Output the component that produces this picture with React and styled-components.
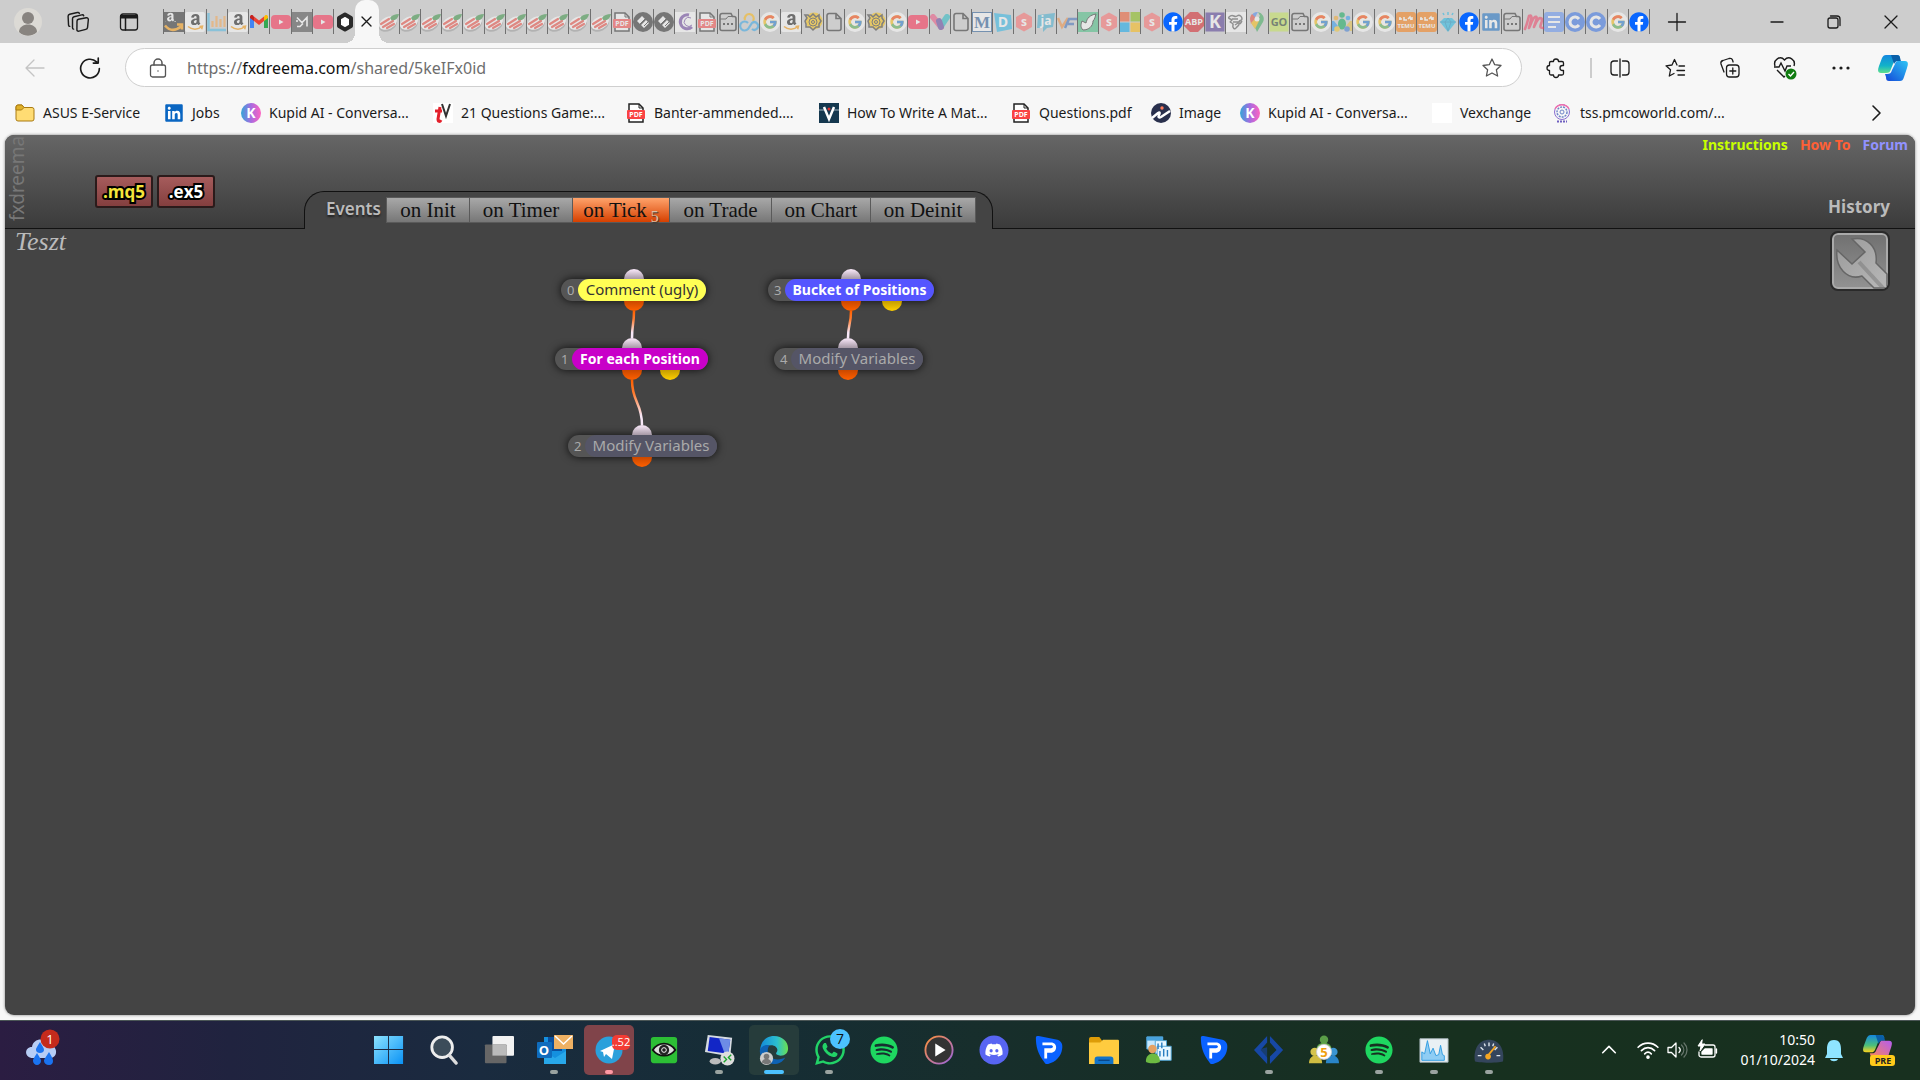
import React from "react";
import styled, { createGlobalStyle } from "styled-components";
import {
  FaAmazon,
  FaDiscord,
  FaFacebook,
  FaLinkedin,
  FaSpotify,
  FaWhatsapp,
} from "react-icons/fa";
import { FcGoogle } from "react-icons/fc";

const uiFont = `"Noto Sans", "Open Sans", sans-serif`;

const GlobalStyle = createGlobalStyle`
  * {
    box-sizing: border-box;
  }

  body {
    margin: 0;
    background: #f7f7f7;
    font-family: ${uiFont};
  }

  button {
    margin: 0;
    padding: 0;
    border: 0;
    background: none;
    color: inherit;
    font: inherit;
  }

  a {
    color: inherit;
    text-decoration: none;
  }

  svg {
    display: block;
    flex-shrink: 0;
    overflow: visible;
  }
`;

// Icons
const Svg = ({ size = 20, box = 20, children, ...rest }) => (
  <svg width={size} height={size} viewBox={`0 0 ${box} ${box}`} fill="none" {...rest}>
    {children}
  </svg>
);

const Line = ({ size = 20, color = "#1b1b1b", children }) => (
  <Svg size={size} stroke={color} strokeWidth="1.3" strokeLinecap="round" strokeLinejoin="round">
    {children}
  </Svg>
);

const Letter = ({ children, x = 10, y = 15, size = 14, fill = "#fff", ...rest }) => (
  <text
    x={x}
    y={y}
    fontSize={size}
    fill={fill}
    textAnchor="middle"
    fontWeight="700"
    fontFamily="Open Sans, sans-serif"
    {...rest}
  >
    {children}
  </text>
);

const IconAmazon = () => (
  <Svg>
    <rect width="20" height="20" rx="2" fill="#fff" />
    <FaAmazon x="2" y="1" size={17} color="#111" />
    <path d="M0 13h20v5H0z" fill="#fff" />
    <path d="M3 14.500c4 3.500 10 3.500 14 0M14.500 14.500l3-.3-.8 3" stroke="#f90" strokeWidth="1.500" />
  </Svg>
);

const IconAmazonDark = () => (
  <Svg>
    <rect width="20" height="20" fill="#222" />
    <FaAmazon x="0" y="0" size={13} color="#fff" />
    <path d="M0 10h12v4H0z" fill="#222" />
    <path d="M1 13.500c5 6 11 5 16 1M13 12.500h5v5" stroke="#f90" strokeWidth="2.500" />
  </Svg>
);

const IconBars = () => (
  <Svg>
    <path d="M1.500 1v17H19" stroke="#48b9e6" strokeWidth="2.500" />
    <path d="M5.500 15V9M9.500 15V4M13.500 15V7M17.500 15V4" stroke="#f9a54a" strokeWidth="2.200" />
  </Svg>
);

const IconGmail = () => (
  <Svg>
    <path d="M1 5v11h4V8z" fill="#4285f4" />
    <path d="M19 5v11h-4V8z" fill="#34a853" />
    <path d="M1 5c0-2 2-2.500 3-1.500l1 1V9L1 6z" fill="#c5221f" />
    <path d="M5 4.500l5 4 5-4V9l-5 4-5-4z" fill="#ea4335" />
    <path d="M19 5c0-2-2-2.500-3-1.500l-1 1V9l4-3z" fill="#fbbc04" />
  </Svg>
);

const IconYoutube = () => (
  <Svg>
    <rect y="3" width="20" height="14" rx="4" fill="#ff2048" />
    <path d="M8 7.500l4.500 2.500L8 12.500z" fill="#fff" />
  </Svg>
);

const IconMail = () => (
  <Svg>
    <rect width="20" height="20" fill="#444" />
    <path d="M5 5.500l5 5 5-5v9M5 8v2M5 14.500h3l3-3" stroke="#fff" strokeWidth="1.600" />
  </Svg>
);

const IconHex = () => (
  <Svg>
    <path d="M10 2.500l6 3.500v8l-6 3.500L4 14V6z" fill="#fff" stroke="#2a2a2a" strokeWidth="4" strokeLinejoin="round" />
  </Svg>
);

const IconLeaf = () => (
  <Svg>
    <ellipse cx="9" cy="13" rx="9.500" ry="6" transform="rotate(-25 9 13)" fill="#999" />
    <ellipse cx="9" cy="11" rx="9.500" ry="6" transform="rotate(-25 9 11)" fill="#fff" />
    <path d="M11 6c2-3 5-4 9-4-1 4-3 6-7 7z" fill="#2f8f3c" />
    <path d="M2 12l8-5M4 15l10-6M8 16l7-4" stroke="#f0453a" strokeWidth="2.200" strokeLinecap="round" />
  </Svg>
);

const IconPdf = () => (
  <Svg>
    <path d="M3 1h10l4 4v14H3z" fill="#fff" stroke="#222" strokeWidth="1.500" />
    <path d="M13 1v4h4" stroke="#222" />
    <rect x="1" y="7" width="18" height="9" rx="1" fill="#fa4343" />
    <Letter y={14} size={7}>PDF</Letter>
  </Svg>
);

const IconCompass = () => (
  <Svg>
    <circle cx="10" cy="10" r="10" fill="#222" />
    <path d="M4 9l5-5 3 3-5 5zM8 13l5-5 3 3-5 5z" fill="#fff" />
    <path d="M7 12l5-5M11 14l4-4" stroke="#222" />
  </Svg>
);

const IconMoon = () => (
  <Svg>
    <rect width="20" height="20" fill="#fff" />
    <path d="M14 3a7 7 0 1 0 3 12" stroke="#6b3fa0" strokeWidth="3" />
    <path d="M16 6a4.500 4.500 0 1 0 1 7" stroke="#6b3fa0" />
  </Svg>
);

const IconTabBox = () => (
  <Svg>
    <path d="M4 1.500h9l1.500 3H16a2 2 0 0 1 2 2v10a2 2 0 0 1-2 2H4a2 2 0 0 1-2-2v-13a2 2 0 0 1 2-2z" stroke="#222" strokeWidth="1.600" />
    <path d="M2 7h6l2-2.500h5" stroke="#222" />
    <path d="M5 12h2M9 12h2M13 12h2" stroke="#222" strokeWidth="2" />
  </Svg>
);

const IconCloud = () => (
  <Svg strokeWidth="2.200">
    <path d="M6 8a4.500 4.500 0 1 1 8 1" stroke="#ffb400" />
    <path d="M9 11a4.500 4.500 0 1 0 0 6l4-6a3.800 3.800 0 1 1 0 6" stroke="#2aa3e8" />
  </Svg>
);

const IconGoogle = () => (
  <Svg>
    <circle cx="10" cy="10" r="10" fill="#fff" />
    <FcGoogle x="2" y="2" size={16} />
  </Svg>
);

const IconSun = () => (
  <Svg>
    <circle cx="11" cy="9" r="8.500" fill="#ffc400" />
    <path d="M2 3h3l2 2 3-3 3 3 3-2v3l2 3-2 3v3h-3l-3 3-3-3H3v-3l-1-3 2-3z" stroke="#333" strokeWidth="1.500" />
    <circle cx="10" cy="10" r="4" stroke="#333" />
    <circle cx="10" cy="10" r="1.500" stroke="#333" />
  </Svg>
);

const IconPage = () => (
  <Svg>
    <path d="M5 1.500h7l5 5v10a2 2 0 0 1-2 2H5a2 2 0 0 1-2-2v-13a2 2 0 0 1 2-2zM12 1.500v5h5" stroke="#222" strokeWidth="1.600" />
  </Svg>
);

const IconHeart = () => (
  <Svg>
    <path d="M3 5l8 10" stroke="#f04a7a" strokeWidth="6" strokeLinecap="round" />
    <path d="M17 5l-6 9" stroke="#19b9c3" strokeWidth="6" strokeLinecap="round" />
    <path d="M9 9l2 6" stroke="#583a9b" strokeWidth="6" strokeLinecap="round" />
  </Svg>
);

const Lettered = ({ bg, fg = "#fff", text, size = 14, radius = 0, outline, serif }) => (
  <Svg>
    <rect x="0.500" y="0.500" width="19" height="19" rx={radius} fill={bg} stroke={outline} />
    <Letter y={10 + size * 0.36} size={size} fill={fg} fontFamily={serif ? "Liberation Serif, serif" : "Open Sans, sans-serif"}>
      {text}
    </Letter>
  </Svg>
);

const IconBadge = ({ color = "#ff6666", text = "s" }) => (
  <Svg>
    <path d="M10 0.500l8 4.500v10l-8 4.500L2 15V5z" fill={color} />
    <Letter y={14} size={12}>{text}</Letter>
  </Svg>
);

const IconMicrosoft = () => (
  <Svg>
    <path d="M0 0h9.500v9.500H0z" fill="#f25022" />
    <path d="M10.500 0H20v9.500h-9.500z" fill="#7fba00" />
    <path d="M0 10.500h9.500V20H0z" fill="#00a4ef" />
    <path d="M10.500 10.500H20V20h-9.500z" fill="#ffb900" />
  </Svg>
);

const IconHand = () => (
  <Svg>
    <rect width="20" height="20" fill="#3fbf7f" />
    <path d="M5 18c-3-3-2-6-1-9l4 2c1-5 4-8 10-9-1 3-1 5-3 7 0 5-4 9-10 9z" fill="#fff" stroke="#222" />
  </Svg>
);

const IconSketch = () => (
  <Svg>
    <rect width="20" height="20" fill="#fff" />
    <path d="M3 5c4-4 5 1 8-1s5 1 5 3-4 1-3 4-2 3-3 5-4 0-3-3-5-2-2-4-4-2-2-4M6 7h6M7 10h6M9 13l3-2M14 12l2-3" stroke="#555" strokeWidth="1.500" />
  </Svg>
);

const IconMaps = () => (
  <Svg>
    <path d="M4 5a7 7 0 0 1 7-5l-5 9z" fill="#4285f4" />
    <path d="M3 7c0-2 1-4 2-5l4 4-5 6z" fill="#ea4335" />
    <path d="M11 0a7 7 0 0 1 5 10l-6 10c-1-3-3-6-5-8l8-8z" fill="#34a853" />
    <path d="M4 11l5-5 3 3-4 8z" fill="#fbbc04" />
    <circle cx="10" cy="7" r="2.500" fill="#fff" />
  </Svg>
);

const IconPeople = () => (
  <Svg>
    <circle cx="10" cy="3" r="2.800" fill="#00a651" />
    <ellipse cx="10" cy="12" rx="4" ry="5.500" fill="#00a651" />
    <circle cx="4" cy="6" r="2.300" fill="#f5a623" />
    <circle cx="16" cy="6" r="2.300" fill="#2196f3" />
    <path d="M2 9l4 5-4 5H0V9z" fill="#2196f3" />
    <path d="M18 9l-4 5 4 5h2V9z" fill="#e8c13c" />
    <circle cx="5" cy="17" r="2.800" fill="#f5c623" />
    <circle cx="15" cy="17" r="2.800" fill="#3578d6" />
  </Svg>
);

const IconTemu = () => (
  <Svg>
    <rect width="20" height="20" rx="3" fill="#fb7701" />
    <path d="M3 7h3M4 5v3M8 5v3h3M12 7l2-2 1 3M16 5v3" stroke="#fff" strokeWidth="1.500" />
    <Letter y={16} size={6}>TEMU</Letter>
  </Svg>
);

const IconDiamond = () => (
  <Svg>
    <path d="M6 6h8l4 4-8 10L2 10z" fill="#13b8e8" />
    <path d="M2 10h16M7 10l3 9 3-9-3-4z" stroke="#0a86b8" strokeWidth="0.800" />
    <path d="M10 0v3M5 1l1 2M15 1l-1 2" stroke="#13b8e8" strokeWidth="1.500" />
  </Svg>
);

const IconFacebook = () => (
  <Svg>
    <circle cx="10" cy="10" r="9" fill="#fff" />
    <FaFacebook size={20} color="#0866ff" />
  </Svg>
);

const IconLinkedin = () => (
  <Svg>
    <rect x="2" y="2" width="16" height="16" fill="#fff" />
    <FaLinkedin size={20} color="#0a66c2" />
  </Svg>
);

const IconMeetup = () => (
  <Svg>
    <path d="M2 17C4 12 5 8 6 4c2-1 3 0 2 4l-2 8c2-4 3-9 6-11 2-1 2 1 1 4l-2 6c2-4 3-8 6-9 3 0 2 3 1 6s-1 4 2 4" stroke="#f0365b" strokeWidth="2.600" strokeLinecap="round" strokeLinejoin="round" />
  </Svg>
);

const IconDocs = () => (
  <Svg>
    <rect width="20" height="20" rx="3" fill="#5b8ff5" />
    <path d="M4 5h12M4 10h12M4 15h8" stroke="#fff" strokeWidth="2.200" />
  </Svg>
);

const IconRoundC = () => (
  <Svg>
    <circle cx="10" cy="10" r="10" fill="#2a6ae9" />
    <path d="M14 7a5 5 0 1 0 0 6" stroke="#fff" strokeWidth="3" />
  </Svg>
);

const IconKupid = () => (
  <Svg>
    <defs>
      <linearGradient id="kupid" x1="0" x2="1">
        <stop stopColor="#34a5d8" />
        <stop offset="0.500" stopColor="#a76be0" />
        <stop offset="1" stopColor="#ff62c0" />
      </linearGradient>
    </defs>
    <circle cx="10" cy="10" r="10" fill="url(#kupid)" />
    <Letter y={15}>K</Letter>
  </Svg>
);

const IconFolder = () => (
  <Svg>
    <path d="M1 4a2 2 0 0 1 2-2h4l2 2.500h8a2 2 0 0 1 2 2V16a2 2 0 0 1-2 2H3a2 2 0 0 1-2-2z" fill="#ffdc73" stroke="#a97b12" />
    <path d="M1 4a2 2 0 0 1 2-2h4l2 2.500L6.500 7H1z" fill="#e0b128" stroke="#a97b12" />
  </Svg>
);

const IconTv = () => (
  <Svg>
    <rect width="20" height="20" fill="#fff" />
    <path d="M9 1l4 12 4-12" stroke="#333" strokeWidth="2" />
    <path d="M2 8h7M7 4L5 16c0 3 2 3 3 1" stroke="#e3202b" strokeWidth="3" />
  </Svg>
);

const IconWriter = () => (
  <Svg>
    <rect width="20" height="20" fill="#15384f" />
    <path d="M5 4l5 12 5-12" stroke="#fff" strokeWidth="2.500" />
    <path d="M0 7h5M15 7h5" stroke="#9fb3c0" />
    <circle cx="10" cy="6" r="1.500" fill="#e03030" />
  </Svg>
);

const IconImage = () => (
  <Svg>
    <circle cx="10" cy="10" r="10" fill="#29304d" />
    <path d="M1 15l6-5c2-1 2 0 1 2s0 3 2 2l9-6" stroke="#fff" strokeWidth="2.500" />
    <circle cx="11" cy="5" r="1.700" fill="#ff7a59" />
  </Svg>
);

const IconEmblem = () => (
  <Svg>
    <circle cx="10" cy="9" r="7.500" stroke="#8a6fd0" />
    <path d="M3 6a8 8 0 0 1 14 0" stroke="#f06fae" strokeWidth="1.500" />
    <circle cx="10" cy="9" r="5" stroke="#6f86c8" strokeDasharray="2 1" strokeWidth="1.500" />
    <circle cx="10" cy="9" r="2" stroke="#6f86c8" />
    <path d="M5 18.500h10" stroke="#6f5fc0" strokeWidth="2" strokeDasharray="2 1" />
  </Svg>
);

const IconCopilot = ({ size = 32, warm }) => (
  <Svg size={size} box={32}>
    <defs>
      <linearGradient id={`cpa${size}`} x1="0" y1="0" x2="0" y2="1">
        <stop stopColor="#1487e0" />
        <stop offset="0.600" stopColor={warm ? "#4bbf7a" : "#12b3c8"} />
        <stop offset="1" stopColor={warm ? "#ffd21c" : "#5fe08c"} />
      </linearGradient>
      <linearGradient id={`cpb${size}`} x1="0" y1="1" x2="1" y2="0">
        <stop stopColor={warm ? "#ff8a4a" : "#1447d8"} />
        <stop offset="1" stopColor={warm ? "#b45cf0" : "#2cc5f5"} />
      </linearGradient>
    </defs>
    <path d="M9 3h11c2 0 3 1 3 3l-2 1c-3 0-4 2-5 5l-2 5c-1 3-2 4-5 4H4c-4 0-3-4-2-7l3-8c1-2 2-3 4-3z" fill={`url(#cpa${size})`} />
    <path d="M14 3h6c3 0 3 3 4 6h-3c-2 0-3 1-4 3z" fill="#0a5fa8" />
    <path d="M23 29H12c-2 0-3-1-3-4l-1-3h2c3 0 4-1 5-4l3-6c1-3 2-3 4-3h6c4 0 3 4 2 7l-3 9c-1 3-2 4-4 4z" fill={`url(#cpb${size})`} />
  </Svg>
);

// Browser tabs
const Strip = styled.nav`
  display: flex;
  align-items: center;
  height: 43px;
  background: #cdcdcd;
`;

const StripActions = styled.div`
  display: flex;
  align-items: center;
  gap: 25px;
  width: 163px;
  padding-left: 14px;
`;

const Avatar = styled.div`
  width: 28px;
  height: 28px;
  border-radius: 50%;
  background: #dcdad5;
  overflow: hidden;
`;

const StripButton = styled.button`
  padding: 0 ${({ $pad }) => $pad || 0}px;
`;

const TabGroup = styled.div`
  display: flex;
  flex: ${({ $grow }) => $grow} 1 0;
  height: 25px;
  border-left: ${({ $line }) => ($line ? "1px solid #707070" : "0")};
`;

const Tab = styled.button`
  display: flex;
  flex: 1;
  align-items: center;
  justify-content: center;
  min-width: 0;
  border-right: ${({ $last }) => ($last ? "0" : "1px solid #707070")};

  svg {
    opacity: ${({ $awake }) => ($awake ? 1 : 0.5)};
  }

  svg svg {
    opacity: 1;
  }
`;

const ActiveTab = styled.button`
  display: flex;
  align-items: center;
  justify-content: center;
  align-self: stretch;
  position: relative;
  width: 24px;
  border-radius: 10px 10px 0 0;
  background: #f7f7f7;

  &::before,
  &::after {
    content: "";
    position: absolute;
    bottom: 0;
    width: 10px;
    height: 10px;
  }

  &::before {
    right: 24px;
    background: radial-gradient(circle at 0 0, transparent 10px, #f7f7f7 10px);
  }

  &::after {
    left: 24px;
    background: radial-gradient(circle at 100% 0, #cdcdcd 10px, #f7f7f7 10px);
  }
`;

const WindowButtons = styled.div`
  display: flex;
  justify-content: space-between;
  width: 270px;
  padding: 0 19px 0 17px;
`;

const WindowGroup = styled.div`
  display: flex;
  gap: 37px;
`;

// Toolbar
const Toolbar = styled.div`
  display: flex;
  align-items: center;
  height: 49px;
  padding: 0 2px 0 25px;
  background: #f7f7f7;
`;

const ToolButton = styled.button`
  display: flex;
  align-items: center;
  justify-content: center;
  width: ${({ $w }) => $w || 55}px;
  height: 32px;
`;

const NavButtons = styled.div`
  display: flex;
  gap: 34px;
  width: 100px;
`;

const Address = styled.div`
  display: flex;
  flex: 1;
  align-items: center;
  gap: 19px;
  height: 39px;
  padding: 0 19px 0 22px;
  border: 1px solid #cfcfcf;
  border-radius: 20px;
  background: #fff;
`;

const Url = styled.a`
  flex: 1;
  color: #6e6e6e;
  font-size: 16px;
  line-height: 24px;

  b {
    color: #111;
    font-weight: 400;
  }
`;

const Divider = styled.div`
  width: 2px;
  height: 20px;
  background: #ccc;
`;

const Bookmarks = styled.div`
  display: flex;
  align-items: center;
  height: 43px;
  padding: 0 0 2px 15px;
  background: #f7f7f7;
`;

const Bookmark = styled.a`
  display: flex;
  align-items: center;
  gap: 8px;
  width: ${({ $w }) => $w}px;
  color: #1b1b1b;
  font-size: 14px;
  white-space: nowrap;
`;

const More = styled.button`
  margin-left: auto;
  padding-right: 34px;
`;

// Page
const Screen = styled.div`
  display: flex;
  flex-direction: column;
  min-height: 100vh;
`;

const Page = styled.main`
  display: flex;
  flex: 1;
  flex-direction: column;
  margin: 0 5px 5px;
  border-radius: 9px;
  background: #444;
  box-shadow: 0 0 3px rgba(0, 0, 0, 0.5);
  overflow: hidden;
`;

const Header = styled.header`
  display: flex;
  height: 94px;
  border-bottom: 1px solid #111;
  background: linear-gradient(#666, #3b3b3b);
`;

const Brand = styled.div`
  width: 90px;
  color: #777;
  font-size: 19px;
  line-height: 24px;

  span {
    display: block;
    writing-mode: vertical-rl;
    transform: rotate(180deg);
    width: 24px;
    height: 86px;
  }
`;

const Downloads = styled.div`
  display: flex;
  gap: 4px;
  width: 209px;
  padding-top: 40px;
`;

const Download = styled.button`
  width: 58px;
  height: 33px;
  border: 2px solid #2b1b1b;
  border-radius: 3px;
  background: linear-gradient(#a65c5c, #843f3f);
  color: ${({ $color }) => $color};
  font-family: "Open Sans", sans-serif;
  font-size: 17px;
  font-weight: 700;
  line-height: 26px;
  -webkit-text-stroke: 4px #000;
  paint-order: stroke fill;
`;

const Events = styled.nav`
  display: flex;
  align-self: flex-end;
  height: 38px;
  margin-bottom: -1px;
  padding: 5px 16px 0 21px;
  border: 1px solid #111;
  border-bottom: 0;
  border-radius: 20px 20px 0 0;
  background: #444;
`;

const EventsTitle = styled.h2`
  width: 60px;
  margin: 0;
  color: #bbb;
  font-size: 17px;
  font-weight: 600;
  line-height: 24px;
  text-shadow: 0 2px 2px #222;
`;

const EventTab = styled.button`
  width: ${({ $w }) => $w}px;
  height: 26px;
  border: 1px solid #5a5a5a;
  border-left-width: ${({ $first }) => ($first ? 1 : 0)}px;
  background: ${({ $active }) =>
    $active ? "linear-gradient(#ffa36b, #d64000)" : "linear-gradient(#a8a8a8, #777)"};
  color: #111;
  font-family: Georgia, "Liberation Serif", serif;
  font-size: 21px;
  line-height: 22px;
  white-space: nowrap;

  sub {
    color: #d8c0a8;
    font-size: 16px;
    line-height: 0;
    text-shadow: 1px 1px 1px #333;
  }
`;

const HeaderSide = styled.div`
  display: flex;
  flex-direction: column;
  justify-content: space-between;
  align-items: flex-end;
  margin-left: auto;
  padding: 0 7px 9px 0;
`;

const Links = styled.nav`
  display: flex;
  gap: 12px;
  font-size: 14px;
  font-weight: 700;
  line-height: 20px;
`;

const HeaderLink = styled.a`
  color: ${({ $color }) => $color};
`;

const History = styled.a`
  margin-right: 18px;
  color: #bbb;
  font-size: 17px;
  font-weight: 700;
  line-height: 24px;
`;

const Canvas = styled.section`
  position: relative;
  flex: 1;
`;

const CanvasTop = styled.div`
  display: flex;
  justify-content: space-between;
  align-items: flex-start;
  padding: 1px 25px 0 10px;
`;

const Title = styled.h1`
  margin: 0;
  color: #bbb;
  font-family: "Monotype Corsiva", "Liberation Serif", serif;
  font-size: 26px;
  font-style: italic;
  font-weight: 400;
  line-height: 24px;
`;

const WrenchButton = styled.button`
  width: 60px;
  height: 60px;
  margin-top: 1px;
  border: 2px solid #2a2a2a;
  border-radius: 8px;
  background: linear-gradient(#707070, #929292);
  box-shadow: inset 0 0 0 2px #aaa;
  overflow: hidden;
`;

const Wires = styled.svg`
  position: absolute;
  top: 0;
  left: 0;
  width: 100%;
  height: 100%;
  pointer-events: none;
`;

const Node = styled.div`
  display: flex;
  position: absolute;
  left: ${({ $x }) => $x}px;
  top: ${({ $y }) => $y}px;
  width: ${({ $w }) => $w}px;
  height: 22px;
  border-radius: 11px;
  background: #555;
  box-shadow: 0 0 9px rgba(0, 0, 0, 0.8);
`;

const NodeNumber = styled.span`
  width: 17px;
  padding-left: 6px;
  color: #aaa;
  font-size: 13px;
  line-height: 22px;
`;

const NodeLabel = styled.span`
  flex: 1;
  border-radius: 11px;
  background: ${({ $bg }) => $bg};
  color: ${({ $color }) => $color};
  font-size: ${({ $bold }) => ($bold ? 14 : 15)}px;
  font-weight: ${({ $bold }) => ($bold ? 700 : 400)};
  line-height: 21px;
  text-align: center;
  white-space: nowrap;
`;

const portColors = {
  in: "linear-gradient(#fbeafb, #a598a5)",
  out: "linear-gradient(#c94800, #ff6000)",
  alt: "linear-gradient(#c49c00, #ffd000)",
};

const Port = styled.i`
  position: absolute;
  left: ${({ $x }) => $x - 10}px;
  ${({ $kind }) => ($kind === "in" ? "bottom: 100%;" : "top: 100%;")}
  width: 20px;
  height: 10px;
  border-radius: ${({ $kind }) => ($kind === "in" ? "10px 10px 0 0" : "0 0 10px 10px")};
  background: ${({ $kind }) => portColors[$kind]};
`;

// Taskbar
const Taskbar = styled.footer`
  display: grid;
  grid-template-columns: 1fr auto 404px;
  height: 60px;
  border-top: 1px solid #4b5656;
  background: linear-gradient(90deg, #2b1d42 0%, #20233f 12%, #1a2b3f 25%, #162d36 38%, #172e2b 52%, #17301f 75%, #18301f 100%);
`;

const Weather = styled.button`
  justify-self: start;
  padding: 0 0 2px 24px;
`;

const Tasks = styled.div`
  display: flex;
`;

const Task = styled.button`
  display: flex;
  flex-direction: column;
  align-items: center;
  justify-content: flex-end;
  width: 55px;
  height: 59px;
`;

const TaskFace = styled.span`
  display: flex;
  align-items: center;
  justify-content: center;
  position: relative;
  width: 50px;
  height: 50px;
  margin-bottom: 5px;
  border-radius: 5px;
  background: ${({ $bg }) => $bg || "transparent"};

  &::after {
    content: "";
    position: absolute;
    bottom: 1px;
    width: ${({ $mark }) => ($mark === "active" ? 20 : 8)}px;
    height: 4px;
    border-radius: 2px;
    background: ${({ $mark }) =>
      ({ active: "#4cc2ff", alert: "#ff99a4", open: "#9aa3a0" })[$mark] || "transparent"};
  }
`;

const Tray = styled.div`
  display: flex;
  align-items: center;
  padding: 0 0 2px 84px;
`;

const TrayButton = styled.button`
  width: ${({ $w }) => $w}px;
`;

const Clock = styled.time`
  display: flex;
  flex-direction: column;
  width: 88px;
  color: #fff;
  font-size: 14px;
  line-height: 20px;
  text-align: right;
`;

const leaf = Array.from({ length: 11 }, () => IconLeaf);
const IconS = () => <IconBadge />;
const IconAbp = () => (
  <Svg>
    <path d="M6 0h8l6 6v8l-6 6H6l-6-6V6z" fill="#d8141c" />
    <Letter y={13} size={9}>ABP</Letter>
  </Svg>
);
const IconM = () => <Lettered bg="#fff" fg="#1f5795" text="M" size={17} outline="#1f5795" serif />;
const IconD = () => (
  <Svg>
    <path d="M1 1l17 2 1 14-15 3z" fill="#22b4e8" />
    <Letter y={15}>D</Letter>
  </Svg>
);
const IconJa = () => (
  <Svg>
    <path d="M2 3l17-2-2 14-6 1-4 4v-4H1z" fill="#3bacd0" />
    <Letter y={13} size={12}>ja</Letter>
  </Svg>
);
const IconVf = () => (
  <Svg>
    <path d="M1 6l4 9 6-9" stroke="#ef8b3a" strokeWidth="2.500" />
    <path d="M8 16l4-9h8M11 12h6" stroke="#3568b8" strokeWidth="2.500" />
  </Svg>
);
const IconK = () => <Lettered bg="#4a2f91" text="K" size={18} />;
const IconGo = () => <Lettered bg="#c4e650" fg="#1f3a1f" text="GO" size={11} />;

const firstTabs = [
  IconAmazonDark,
  IconAmazon,
  IconBars,
  IconAmazon,
  IconGmail,
  IconYoutube,
  IconMail,
  IconYoutube,
  IconHex,
];

const lastTabs = [
  ...leaf,
  IconPdf, IconCompass, IconCompass, IconMoon, IconPdf, IconTabBox, IconCloud,
  IconGoogle, IconAmazon, IconSun, IconPage, IconGoogle, IconSun, IconGoogle,
  IconYoutube, IconHeart, IconPage, IconM, IconD, IconS, IconJa, IconVf,
  IconHand, IconS, IconMicrosoft, IconS, IconFacebook, IconAbp, IconK,
  IconSketch, IconMaps, IconGo, IconTabBox, IconGoogle, IconPeople, IconGoogle,
  IconGoogle, IconTemu, IconTemu, IconDiamond, IconFacebook, IconLinkedin,
  IconTabBox, IconMeetup, IconDocs, IconRoundC, IconRoundC, IconGoogle,
  IconFacebook,
];

const awake = [IconGmail, IconHex, IconFacebook];

const IconBlank = () => (
  <Svg>
    <rect width="20" height="20" fill="#fff" />
  </Svg>
);

const bookmarks = [
  { text: "ASUS E-Service", icon: IconFolder, w: 149 },
  { text: "Jobs", icon: IconLinkedin, w: 77 },
  { text: "Kupid AI - Conversa...", icon: IconKupid, w: 192 },
  { text: "21 Questions Game:...", icon: IconTv, w: 193 },
  { text: "Banter-ammended....", icon: IconPdf, w: 193 },
  { text: "How To Write A Mat...", icon: IconWriter, w: 192 },
  { text: "Questions.pdf", icon: IconPdf, w: 140 },
  { text: "Image", icon: IconImage, w: 89 },
  { text: "Kupid AI - Conversa...", icon: IconKupid, w: 192 },
  { text: "Vexchange", icon: IconBlank, w: 120 },
  { text: "tss.pmcoworld.com/...", icon: IconEmblem, w: 180 },
];

const events = [
  { text: "on Init", w: 84 },
  { text: "on Timer", w: 103 },
  { text: "on Tick", w: 97, count: 5 },
  { text: "on Trade", w: 102 },
  { text: "on Chart", w: 99 },
  { text: "on Deinit", w: 105 },
];

const nodes = [
  { text: "Comment (ugly)", x: 556, y: 50, w: 145, bg: "#ffff55", color: "#333", port: 73 },
  { text: "For each Position", x: 550, y: 119, w: 153, bg: "#c800c8", color: "#fff", bold: true, port: 77, alt: 115 },
  { text: "Modify Variables", x: 563, y: 206, w: 149, bg: "#556", color: "#aaa", port: 74 },
  { text: "Bucket of Positions", x: 763, y: 50, w: 166, bg: "#5555ff", color: "#fff", bold: true, port: 83, alt: 124 },
  { text: "Modify Variables", x: 769, y: 119, w: 149, bg: "#556", color: "#aaa", port: 74 },
];

const wires = [
  [629, 82, 627, 109],
  [627, 151, 637, 196],
  [846, 82, 843, 109],
];

// Taskbar drawings
const TaskIcon = ({ children }) => (
  <Svg size={30} box={32}>
    {children}
  </Svg>
);

const PLogo = () => (
  <TaskIcon>
    <path d="M2 3c0-2 1-2 3-2l20 4c4 1 6 5 5 10-1 8-7 14-15 16-2 0-3 0-4-2C4 20 2 12 2 3z" fill="#0a62ff" />
    <path d="M9 8h9c8 0 7 11 0 11h-4v6h-3V14h7c3 0 3-3 0-3H9z" fill="#fff" />
  </TaskIcon>
);

const Spotify = () => <FaSpotify size={28} color="#1ed760" />;

const taskIcons = [
  {
    name: "Start",
    icon: (
      <TaskIcon>
        <defs>
          <linearGradient id="win" x1="0" y1="0" x2="1" y2="1">
            <stop stopColor="#8ce3ff" />
            <stop offset="1" stopColor="#0a92f5" />
          </linearGradient>
        </defs>
        <path d="M0 1h15v14H0zM16 1h15v14H16zM0 16h15v15H0zM16 16h15v15H16z" fill="url(#win)" />
      </TaskIcon>
    ),
  },
  {
    name: "Search",
    icon: (
      <TaskIcon>
        <circle cx="14" cy="13" r="11" fill="#3c4c5a" stroke="#eee" strokeWidth="3" />
        <path d="M22 22l7 8" stroke="#ddd" strokeWidth="3.500" strokeLinecap="round" />
      </TaskIcon>
    ),
  },
  {
    name: "Task view",
    icon: (
      <TaskIcon>
        <rect x="9" y="1" width="23" height="21" rx="1" fill="#f2f2f2" />
        <rect x="1" y="10" width="23" height="20" rx="1" fill="#666" />
        <path d="M9 10h15v12H9z" fill="#bbb" />
      </TaskIcon>
    ),
  },
  {
    name: "Outlook",
    mark: "open",
    icon: (
      <Svg size={36} box={36}>
        <path d="M8 5h22v27H8z" fill="#1490df" />
        <path d="M8 19l11 7 11-7v13H8z" fill="#28a8ea" />
        <path d="M12 5h14v14H12z" fill="#0a4f9e" />
        <rect x="1" y="10" width="15" height="16" rx="1" fill="#0f6cbd" />
        <Letter x={8} y={23} size={13}>O</Letter>
        <path d="M18 3h19v14H18z" fill="#eeb163" />
        <path d="M19 4l8.500 8L36 4" stroke="#fff" strokeWidth="1.500" />
      </Svg>
    ),
  },
  {
    name: "Telegram",
    mark: "alert",
    bg: "#80444a",
    icon: (
      <Svg size={44} box={44}>
        <circle cx="22" cy="22" r="13.500" fill="#2ba0db" />
        <path d="M13 23l15-7-3 15-6-5-2 3-1-5z" fill="#fff" />
        <rect x="25" y="7" width="18" height="15" rx="5" fill="#f23c34" />
        <Letter x={34} y={18} size={11} fontWeight="400">..52</Letter>
      </Svg>
    ),
  },
  {
    name: "Vision",
    icon: (
      <TaskIcon>
        <rect x="2" y="2" width="28" height="28" rx="3" fill="#2cbf35" />
        <path d="M4 16c6-9 18-9 24 0-6 8-18 8-24 0z" fill="#ddd" stroke="#111" strokeWidth="2" />
        <circle cx="16" cy="16" r="5.500" fill="#222" />
        <circle cx="16" cy="16" r="2.500" stroke="#fff" />
      </TaskIcon>
    ),
  },
  {
    name: "Remote desktop",
    mark: "open",
    icon: (
      <TaskIcon>
        <path d="M4 0l26 3-2 20L1 18z" fill="#d6dbe2" />
        <path d="M6 2l22 3-2 15L4 17z" fill="#1226c6" />
        <path d="M16 3.500L28 5l-2 15-4-.600z" fill="#6d8ce6" />
        <ellipse cx="12" cy="28" rx="6" ry="3.500" fill="#bbb" />
        <circle cx="25" cy="25" r="7.500" fill="#ddd" />
        <path d="M21 23l3 3-3 3M29 21l-3 3 3 3" stroke="#1ca32c" strokeWidth="1.500" />
      </TaskIcon>
    ),
  },
  {
    name: "Edge",
    mark: "active",
    bg: "#263c3b",
    icon: (
      <TaskIcon>
        <defs>
          <linearGradient id="edge">
            <stop stopColor="#1389d8" />
            <stop offset="0.600" stopColor="#2bbfd0" />
            <stop offset="1" stopColor="#6be04f" />
          </linearGradient>
        </defs>
        <path d="M1 17C2 6 8 1 16 1c9 0 15 6 15 13 0 5-3 8-8 8-4 0-6-2-4-4 2-3-1-7-6-7S3 13 1 17z" fill="url(#edge)" />
        <path d="M1 16c1-4 6-6 10-5-4 7-1 15 9 15 3 0 6-1 8-2-3 5-7 7-12 7C7 31 0 24 1 16z" fill="#0e62b4" />
        <circle cx="8" cy="25" r="7" fill="#ccc" />
        <circle cx="8" cy="23" r="3" fill="#777" />
        <path d="M3 29c1-5 9-5 10 0-3 3-7 3-10 0z" fill="#777" />
      </TaskIcon>
    ),
  },
  {
    name: "WhatsApp",
    mark: "open",
    icon: (
      <Svg size={40} box={40}>
        <FaWhatsapp x="4" y="3" size={34} color="#22d267" />
        <circle cx="31" cy="9" r="10" fill="#4cc2ff" />
        <Letter x={31} y={14} size={14} fill="#111" fontWeight="400">7</Letter>
      </Svg>
    ),
  },
  { name: "Spotify", icon: <Spotify /> },
  {
    name: "Media player",
    icon: (
      <TaskIcon>
        <defs>
          <linearGradient id="media" x1="0" y1="0" x2="1" y2="1">
            <stop stopColor="#ff913a" />
            <stop offset="1" stopColor="#9865de" />
          </linearGradient>
        </defs>
        <circle cx="16" cy="16" r="14.500" fill="#333" stroke="url(#media)" strokeWidth="2" />
        <path d="M12 9l11 7-11 7z" fill="#fff" />
      </TaskIcon>
    ),
  },
  {
    name: "Discord",
    icon: (
      <TaskIcon>
        <circle cx="16" cy="16" r="15.500" fill="#5865f2" />
        <FaDiscord x="6" y="6" size={20} color="#fff" />
      </TaskIcon>
    ),
  },
  { name: "P", icon: <PLogo /> },
  {
    name: "Files",
    icon: (
      <TaskIcon>
        <path d="M0 4c0-1 1-2 2-2h9l3 4v5H0z" fill="#dd9c08" />
        <path d="M0 8h12l3-3h16c1 0 1 1 1 2v24H0z" fill="#ffcb3f" />
        <path d="M6 31v-5c0-2 1-3 3-3h14c2 0 3 1 3 3v5z" fill="#1373c8" />
        <path d="M10 27h12" stroke="#0a478a" strokeWidth="1.500" />
      </TaskIcon>
    ),
  },
  {
    name: "Strategy",
    icon: (
      <TaskIcon>
        <path d="M3 2h17v13H3z" fill="#c6e8ff" stroke="#49a2dc" />
        <path d="M3 2h17v4H3z" fill="#49a2dc" />
        <path d="M12 6h12v14H12z" fill="#e8f6ff" stroke="#4da2d2" />
        <path d="M14 12h15v15H14z" fill="#e8f6ff" stroke="#4da2d2" />
        <path d="M15 9v6M19 8v6M17 17v6M21 15v8M25 16v7" stroke="#287cc0" strokeWidth="1.500" />
        <circle cx="9" cy="15" r="4.500" fill="#e5a163" />
        <path d="M2 28c0-11 15-11 15 0 0 3-15 3-15 0z" fill="#6dbb42" />
      </TaskIcon>
    ),
  },
  { name: "P", icon: <PLogo /> },
  {
    name: "Trading",
    mark: "open",
    icon: (
      <TaskIcon>
        <path d="M14 1v7L7 16l7 8v7L0 16z" fill="#1748a6" />
        <path d="M14 13v15L3 16z" fill="#1748a6" opacity="0.600" />
        <path d="M17 1l14 15-14 15v-8l7-7-7-8z" fill="#1748a6" />
      </TaskIcon>
    ),
  },
  {
    name: "MetaTrader",
    icon: (
      <TaskIcon>
        <circle cx="16" cy="5" r="4.500" fill="#5a9d48" />
        <path d="M8 15c0-9 16-9 16 0z" fill="#62a94b" />
        <circle cx="6" cy="18" r="4.500" fill="#d5c44e" />
        <path d="M0 30c0-11 14-11 14 0z" fill="#d0bd42" />
        <circle cx="26" cy="18" r="4.500" fill="#3b95d2" />
        <path d="M18 30c0-11 14-11 14 0z" fill="#2a85c8" />
        <circle cx="16" cy="18" r="8" fill="#fff" stroke="#ccc" />
        <Letter x={16} y={23} size={14} fill="#f0a010">5</Letter>
      </TaskIcon>
    ),
  },
  { name: "Spotify", mark: "open", icon: <Spotify /> },
  {
    name: "Monitor",
    mark: "open",
    icon: (
      <TaskIcon>
        <path d="M1 4h30v25H1z" fill="#e9f0f4" stroke="#aab7bd" />
        <path d="M3 27V18l3 2 3-14 3 14 3-6 3 8 3-1 2-10 2 10 2 1v5z" fill="#8fcdf4" stroke="#2e9be0" />
      </TaskIcon>
    ),
  },
  {
    name: "Speed",
    mark: "open",
    icon: (
      <TaskIcon>
        <path d="M1 28C-1 14 6 5 16 5s17 9 15 23c0 2-30 2-30 0z" fill="#34455c" />
        <path d="M4 22h4M24 22h4M7 13l3 3M25 13l-3 3M16 8v4M11 9l1 3M21 9l-1 3" stroke="#dce4ec" strokeWidth="1.500" />
        <circle cx="15" cy="23" r="3" fill="#f5a623" />
        <path d="M14 23l9-11" stroke="#f5a623" strokeWidth="2" />
      </TaskIcon>
    ),
  },
];

const App = () => {
  const renderTabs = (icons, openEnd) =>
    icons.map((Icon, i) => (
      <Tab key={i} $awake={awake.includes(Icon)} $last={openEnd && i === icons.length - 1} aria-label="Tab">
        <Icon />
      </Tab>
    ));

  return (
    <>
      <GlobalStyle />
      <Screen>
        <Strip>
          <StripActions>
            <Avatar>
              <Svg size={28} box={28}>
                <circle cx="14" cy="10" r="6" fill="#888480" />
                <path d="M5 24c0-10 18-10 18 0-5 5-13 5-18 0z" fill="#888480" />
              </Svg>
            </Avatar>
            <StripButton aria-label="Workspaces">
              <Line size={22}>
                <path d="M10.500 7.500l7-1.300c1.200-.2 2 .5 1.900 1.700l-.7 7c-.1 1-.7 1.600-1.600 1.800l-6.200 1.600c-1.200.3-2-.4-1.900-1.500l.1-7.600c0-1 .5-1.500 1.400-1.700z" />
                <path d="M6 16.500c-.7 0-1-.5-1-1.200V7c0-1 .5-1.500 1.400-1.800l7-1.700c1-.2 1.600.1 1.800.8" />
                <path d="M2.500 14c-.7 0-1-.5-1.100-1.200l-.4-8c0-1 .5-1.500 1.400-1.800l7-1.600c1-.2 1.600.1 1.800.8" />
              </Line>
            </StripButton>
            <StripButton $pad={5} aria-label="Tab actions">
              <Line>
                <rect x="1.500" y="2" width="17" height="16" rx="2.500" />
                <path d="M2 4h16M2 5.500h16" strokeWidth="2" />
                <path d="M6.500 6v12" strokeWidth="1.500" />
              </Line>
            </StripButton>
          </StripActions>
          <TabGroup $grow={9} $line>
            {renderTabs(firstTabs, true)}
          </TabGroup>
          <ActiveTab aria-label="Close tab">
            <Line size={15}>
              <path d="M4 4l12 12M16 4L4 16" strokeWidth="1.800" />
            </Line>
          </ActiveTab>
          <TabGroup $grow={60}>{renderTabs(lastTabs, false)}</TabGroup>
          <WindowButtons>
            <button aria-label="New tab">
              <Line>
                <path d="M10 1.500v17M1.500 10h17" />
              </Line>
            </button>
            <WindowGroup>
              <button aria-label="Minimize">
                <Line>
                  <path d="M4 10h12" />
                </Line>
              </button>
              <button aria-label="Restore">
                <Line>
                  <rect x="4" y="6" width="10" height="10" rx="2" />
                  <path d="M6.500 4H13a3 3 0 0 1 3 3v6.500" />
                </Line>
              </button>
              <button aria-label="Close">
                <Line>
                  <path d="M4 4l12 12M16 4L4 16" />
                </Line>
              </button>
            </WindowGroup>
          </WindowButtons>
        </Strip>

        <Toolbar>
          <NavButtons>
            <button aria-label="Back">
              <Line color="#c4c4c4">
                <path d="M19 10H1M9 2l-8 8 8 8" />
              </Line>
            </button>
            <button aria-label="Refresh">
              <Line size={22}>
                <path d="M18.500 10.500A8.500 8.500 0 1 1 16 4.500M17.500 1v4.500H13" strokeWidth="1.500" />
              </Line>
            </button>
          </NavButtons>
          <Address>
            <Line color="#555">
              <rect x="2.500" y="7" width="15" height="12" rx="2" />
              <path d="M6 7V5a4 4 0 0 1 8 0v2M10 13v.1" strokeWidth="1.500" />
            </Line>
            <Url href="#">
              https://<b>fxdreema.com</b>/shared/5keIFx0id
            </Url>
            <button aria-label="Add to favorites">
              <Line color="#555">
                <path d="M10 1l2.700 5.700 6.300.8-4.600 4.300 1.200 6.200-5.600-3-5.600 3 1.200-6.200L1 7.500l6.300-.8z" />
              </Line>
            </button>
          </Address>
          <ToolButton $w={68} aria-label="Extensions">
            <Line>
              <path d="M3.500 5a1.500 1.500 0 0 1 1.500-1.500h2.500a2.500 2.500 0 1 1 5 0H16a1.500 1.500 0 0 1 1.500 1.500v2.500h-1a2.500 2.500 0 0 0 0 5h1V15.500A1.500 1.500 0 0 1 16 17h-3.500a2.500 2.500 0 1 1-5 0H5a1.500 1.500 0 0 1-1.500-1.500v-3a2.500 2.500 0 1 1 0-5z" />
            </Line>
          </ToolButton>
          <Divider aria-hidden="true" />
          <ToolButton aria-label="Split screen">
            <Line>
              <path d="M10 1v18M7.500 3H4a3 3 0 0 0-3 3v8a3 3 0 0 0 3 3h3.500M12.500 3H16a3 3 0 0 1 3 3v8a3 3 0 0 1-3 3h-3.500" />
            </Line>
          </ToolButton>
          <ToolButton aria-label="Favorites">
            <Line>
              <path d="M12 7L9.500 1.500 7 7l-6 .8 4.500 4L4.300 18 9 15.500M14 8h5.500M12 12.500h7.500M13 17h6.500" />
            </Line>
          </ToolButton>
          <ToolButton aria-label="Collections">
            <Line>
              <rect x="6.500" y="7" width="12.500" height="12" rx="3" />
              <path d="M12.800 10v6M9.800 13h6M4 14L1 6c-.5-2 0-3 2-3.500l6-2c2-.5 3 0 3.500 1.500l.6 2" />
            </Line>
          </ToolButton>
          <ToolButton $w={56} aria-label="Browser essentials">
            <Svg size={24} box={24} stroke="#1b1b1b" strokeWidth="1.400">
              <path d="M2 10C0 4 7-1 11.500 4 16-1 23 4 21 10M4 14l7 7 1-1M1 11h5l2-4 4 8 2-5h4" />
              <circle cx="18" cy="18" r="5.500" fill="#107c10" stroke="none" />
              <path d="M15.500 18l2 2 3.500-4" stroke="#fff" />
            </Svg>
          </ToolButton>
          <ToolButton aria-label="Menu">
            <Svg>
              <circle cx="3" cy="10" r="1.600" fill="#1b1b1b" />
              <circle cx="10" cy="10" r="1.600" fill="#1b1b1b" />
              <circle cx="17" cy="10" r="1.600" fill="#1b1b1b" />
            </Svg>
          </ToolButton>
          <ToolButton $w={50} aria-label="Copilot">
            <IconCopilot />
          </ToolButton>
        </Toolbar>

        <Bookmarks>
          {bookmarks.map(({ text, icon: Icon, w }, i) => (
            <Bookmark key={i} href="#" $w={w}>
              <Icon />
              {text}
            </Bookmark>
          ))}
          <More aria-label="More favorites">
            <Line>
              <path d="M7 3l7 7-7 7" strokeWidth="1.600" />
            </Line>
          </More>
        </Bookmarks>

        <Page>
          <Header>
            <Brand>
              <span>fxdreema</span>
            </Brand>
            <Downloads>
              <Download $color="#f5e53b">.mq5</Download>
              <Download $color="#fff">.ex5</Download>
            </Downloads>
            <Events>
              <EventsTitle>Events</EventsTitle>
              {events.map(({ text, w, count }, i) => (
                <EventTab key={text} $w={w} $first={i === 0} $active={Boolean(count)}>
                  {text}
                  {count ? <sub> {count}</sub> : null}
                </EventTab>
              ))}
            </Events>
            <HeaderSide>
              <Links>
                <HeaderLink href="#" $color="#c8ff00">Instructions</HeaderLink>
                <HeaderLink href="#" $color="#ff6036">How To</HeaderLink>
                <HeaderLink href="#" $color="#9292ff">Forum</HeaderLink>
              </Links>
              <History href="#">History</History>
            </HeaderSide>
          </Header>

          <Canvas>
            <CanvasTop>
              <Title>Teszt</Title>
              <WrenchButton aria-label="Tools">
                <Svg size={56} box={56}>
                  <defs>
                    <linearGradient id="wrench" x1="0" y1="0" x2="1" y2="1">
                      <stop stopColor="#9a9a9a" />
                      <stop offset="1" stopColor="#b8b8b8" />
                    </linearGradient>
                  </defs>
                  <path
                    d="M20 6c15-3 26 8 24 24l11 11v14H42L30 43C15 48 3 34 5 17l15 14 13-12z"
                    fill="url(#wrench)"
                    stroke="#666"
                    strokeWidth="1.500"
                  />
                  <path d="M27 29l24 26" stroke="#777" strokeWidth="4" opacity="0.500" />
                </Svg>
              </WrenchButton>
            </CanvasTop>
            {nodes.map(({ text, x, y, w, bg, color, bold, port, alt }, i) => (
              <Node key={i} $x={x} $y={y} $w={w}>
                <Port $kind="in" $x={port} />
                <Port $kind="out" $x={port} />
                {alt ? <Port $kind="alt" $x={alt} /> : null}
                <NodeNumber>{i}</NodeNumber>
                <NodeLabel $bg={bg} $color={color} $bold={bold}>{text}</NodeLabel>
              </Node>
            ))}
            <Wires>
              {wires.map(([x1, y1, x2, y2], i) => (
                <g key={i}>
                  <linearGradient id={`wire${i}`} gradientUnits="userSpaceOnUse" x1="0" x2="0" y1={y1} y2={y2}>
                    <stop stopColor="#ff6000" />
                    <stop offset="0.300" stopColor="#ff7c30" />
                    <stop offset="0.800" stopColor="#f8e8f8" />
                  </linearGradient>
                  <path
                    d={`M${x1} ${y1}C${x1} ${(y1 + y2) / 2} ${x2} ${(y1 + y2) / 2} ${x2} ${y2}`}
                    fill="none"
                    stroke={`url(#wire${i})`}
                    strokeWidth="2.500"
                  />
                </g>
              ))}
            </Wires>
          </Canvas>
        </Page>

        <Taskbar>
          <Weather aria-label="Weather">
            <Svg size={40} box={40}>
              <path d="M9 28c-9 0-9-11-1-11 1-9 14-10 16-2 10-1 11 13 2 13z" fill="#b7cdf5" />
              <path d="M13 23c-3 5-4 6-4 8s2 4 4 4 4-2 4-4-1-3-4-8zM25 22c-3 5-5 7-5 9s2 4 5 4 4-2 4-4-1-4-4-9zM16 12c-3 5-4 6-4 8s2 3 4 3 4-1 4-3-1-3-4-8z" fill="#1a73f0" />
              <circle cx="26" cy="9" r="9.500" fill="#c42b1c" />
              <Letter x={26} y={14} size={13} fontWeight="400">1</Letter>
            </Svg>
          </Weather>
          <Tasks>
            {taskIcons.map(({ name, icon, mark, bg }, i) => (
              <Task key={i} aria-label={name}>
                <TaskFace $mark={mark} $bg={bg}>{icon}</TaskFace>
              </Task>
            ))}
          </Tasks>
          <Tray>
            <TrayButton $w={37} aria-label="Hidden icons">
              <Line color="#fff" size={18}>
                <path d="M3 13l7-7 7 7" strokeWidth="1.800" />
              </Line>
            </TrayButton>
            <TrayButton $w={30} aria-label="Network">
              <Line color="#fff" size={22}>
                <path d="M1 7.500c5-5 13-5 18 0M4 10.500c3.500-3.500 8.500-3.500 12 0M7 13.500c2-2 4-2 6 0" strokeWidth="1.500" />
                <circle cx="10" cy="16.500" r="1" fill="#fff" />
              </Line>
            </TrayButton>
            <TrayButton $w={30} aria-label="Volume">
              <Line color="#fff">
                <path d="M1 7.500h3.500L9 3v14l-4.500-4.500H1zM12 7.500c1.500 1.500 1.500 3.500 0 5" />
                <path d="M14.500 5c3 3 3 7 0 10M17 3c4 4 4 10 0 14" stroke="#66756b" />
              </Line>
            </TrayButton>
            <TrayButton $w={30} aria-label="Battery">
              <Line color="#fff">
                <path d="M8 5h8a2 2 0 0 1 2 2v8a2 2 0 0 1-2 2H4a2 2 0 0 1-2-2v-3M19.500 9v4" />
                <path d="M5 12l3-3h7v5H5z" fill="#fff" />
                <path d="M5 0L1 6h3l-1 5 5-7H5z" fill="#fff" strokeWidth="1" />
              </Line>
            </TrayButton>
            <Clock>
              <span>10:50</span>
              <span>01/10/2024</span>
            </Clock>
            <TrayButton $w={47} aria-label="Notifications">
              <Svg size={38} box={38}>
                <path d="M19 9c6 0 7 5 7 9v5l2 4H10l2-4v-5c0-4 1-9 7-9zM15 28h8c-1 3-7 3-8 0z" fill="#8fe4ff" />
              </Svg>
            </TrayButton>
            <TrayButton $w={40} aria-label="Copilot preview">
              <Svg size={36} box={36}>
                <IconCopilot size={31} warm />
                <rect x="8" y="23" width="25" height="11" rx="3" fill="#ffca1a" />
                <Letter x={21} y={32} size={9} fill="#222">PRE</Letter>
              </Svg>
            </TrayButton>
          </Tray>
        </Taskbar>
      </Screen>
    </>
  );
};

export default App;
